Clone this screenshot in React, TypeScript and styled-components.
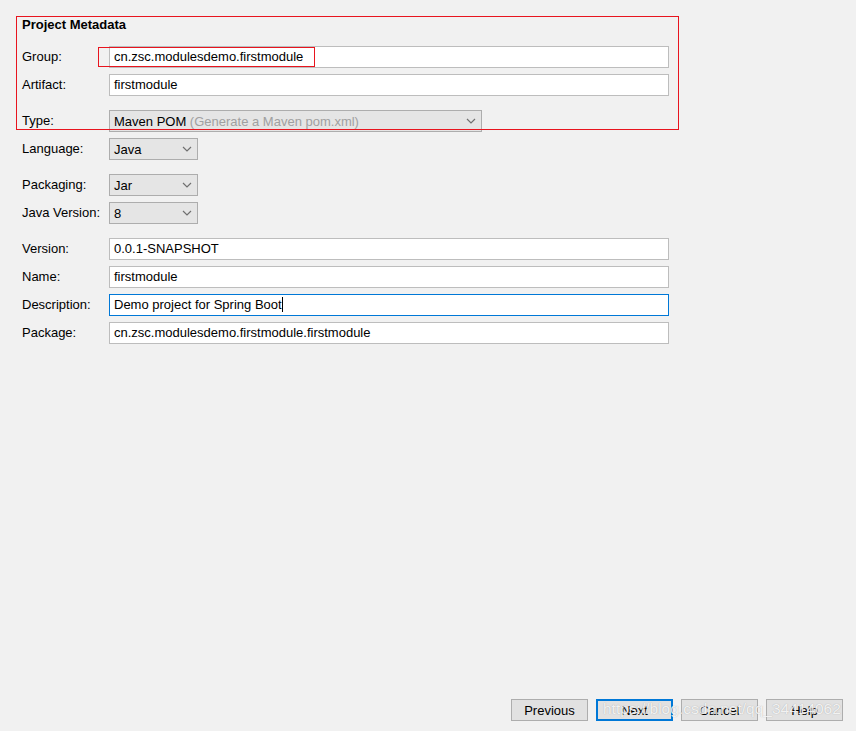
import React from 'react';
import styled, { createGlobalStyle } from 'styled-components';

const GlobalStyle = createGlobalStyle`
  html, body {
    margin: 0;
    padding: 0;
    background: #f0f0f0;
  }
  body {
    font-family: "Liberation Sans", Arial, sans-serif;
    font-size: 13px;
    color: #000;
  }
`;

const Window = styled.div`
  position: relative;
  width: 856px;
  height: 731px;
  box-sizing: border-box;
  display: flex;
  flex-direction: column;
  background: #f1f1f1;
  overflow: hidden;
`;

const Form = styled.div`
  flex: 1;
  padding: 14px 0 0 22px;
  display: flex;
  flex-direction: column;
`;

const SectionTitle = styled.div`
  height: 22px;
  line-height: 22px;
  font-weight: bold;
  margin-bottom: 10px;
`;

const Row = styled.div<{ $spaced?: boolean }>`
  display: grid;
  grid-template-columns: 87px auto;
  align-items: center;
  height: 22px;
  margin-top: ${(p) => (p.$spaced ? '14px' : '6px')};

  &:first-of-type {
    margin-top: 0;
  }
`;

const Label = styled.label`
  line-height: 22px;
  white-space: nowrap;
`;

const TextField = styled.div<{ $focused?: boolean }>`
  width: 560px;
  height: 22px;
  box-sizing: border-box;
  background: #fff;
  border: 1px solid ${(p) => (p.$focused ? '#0078d7' : '#bdbdbd')};
  padding: 0 4px;
  line-height: 20px;
  white-space: nowrap;
`;

const Caret = styled.span`
  display: inline-block;
  width: 1px;
  height: 15px;
  background: #000;
  vertical-align: -3px;
`;

const Combo = styled.div<{ $width: number }>`
  width: ${(p) => p.$width}px;
  height: 22px;
  box-sizing: border-box;
  background: #e5e5e5;
  border: 1px solid #adadad;
  padding: 0 5px 0 4px;
  display: flex;
  align-items: center;
  justify-content: space-between;
  white-space: nowrap;
`;

const Hint = styled.span`
  color: #a0a0a0;
`;

const Chevron = () => (
  <svg width="10" height="6" viewBox="0 0 10 6">
    <path d="M1 1 L5 5 L9 1" fill="none" stroke="#707070" strokeWidth="1.2" />
  </svg>
);

const Footer = styled.div`
  display: flex;
  justify-content: flex-end;
  gap: 8px;
  padding: 0 13px 10px 0;
`;

const Button = styled.button<{ $primary?: boolean }>`
  width: 77px;
  height: 22px;
  box-sizing: border-box;
  background: #e1e1e1;
  border: ${(p) => (p.$primary ? '2px solid #0078d7' : '1px solid #adadad')};
  font-family: inherit;
  font-size: 13px;
  color: #000;
  padding: 0;
`;

const Annotation = styled.div<{ $x: number; $y: number; $w: number; $h: number }>`
  position: absolute;
  left: ${(p) => p.$x}px;
  top: ${(p) => p.$y}px;
  width: ${(p) => p.$w}px;
  height: ${(p) => p.$h}px;
  box-sizing: border-box;
  border: 1px solid #e8141e;
  pointer-events: none;
`;

const Watermark = styled.div`
  position: absolute;
  left: 603px;
  top: 700px;
  font-family: "Liberation Sans", Arial, sans-serif;
  font-size: 15.5px;
  color: rgba(255, 255, 255, 0.85);
  text-shadow: 0 0 1px rgba(120, 120, 120, 0.6);
  pointer-events: none;
  white-space: nowrap;
`;

export default function App() {
  return (
    <Window>
      <GlobalStyle />
      <Form>
        <SectionTitle>Project Metadata</SectionTitle>
        <div>
          <Row>
            <Label>Group:</Label>
            <TextField>cn.zsc.modulesdemo.firstmodule</TextField>
          </Row>
          <Row>
            <Label>Artifact:</Label>
            <TextField>firstmodule</TextField>
          </Row>
          <Row $spaced>
            <Label>Type:</Label>
            <Combo $width={373}>
              <span>
                Maven POM <Hint>(Generate a Maven pom.xml)</Hint>
              </span>
              <Chevron />
            </Combo>
          </Row>
          <Row>
            <Label>Language:</Label>
            <Combo $width={89}>
              <span>Java</span>
              <Chevron />
            </Combo>
          </Row>
          <Row $spaced>
            <Label>Packaging:</Label>
            <Combo $width={89}>
              <span>Jar</span>
              <Chevron />
            </Combo>
          </Row>
          <Row>
            <Label>Java Version:</Label>
            <Combo $width={89}>
              <span>8</span>
              <Chevron />
            </Combo>
          </Row>
          <Row $spaced>
            <Label>Version:</Label>
            <TextField>0.0.1-SNAPSHOT</TextField>
          </Row>
          <Row>
            <Label>Name:</Label>
            <TextField>firstmodule</TextField>
          </Row>
          <Row>
            <Label>Description:</Label>
            <TextField $focused>
              Demo project for Spring Boot
              <Caret />
            </TextField>
          </Row>
          <Row>
            <Label>Package:</Label>
            <TextField>cn.zsc.modulesdemo.firstmodule.firstmodule</TextField>
          </Row>
        </div>
      </Form>
      <Footer>
        <Button>Previous</Button>
        <Button $primary>Next</Button>
        <Button>Cancel</Button>
        <Button>Help</Button>
      </Footer>
      <Annotation $x={16} $y={16} $w={663} $h={114} />
      <Annotation $x={98} $y={47} $w={217} $h={20} />
      <Watermark>https://blog.csdn.net/qq_34414062</Watermark>
    </Window>
  );
}
